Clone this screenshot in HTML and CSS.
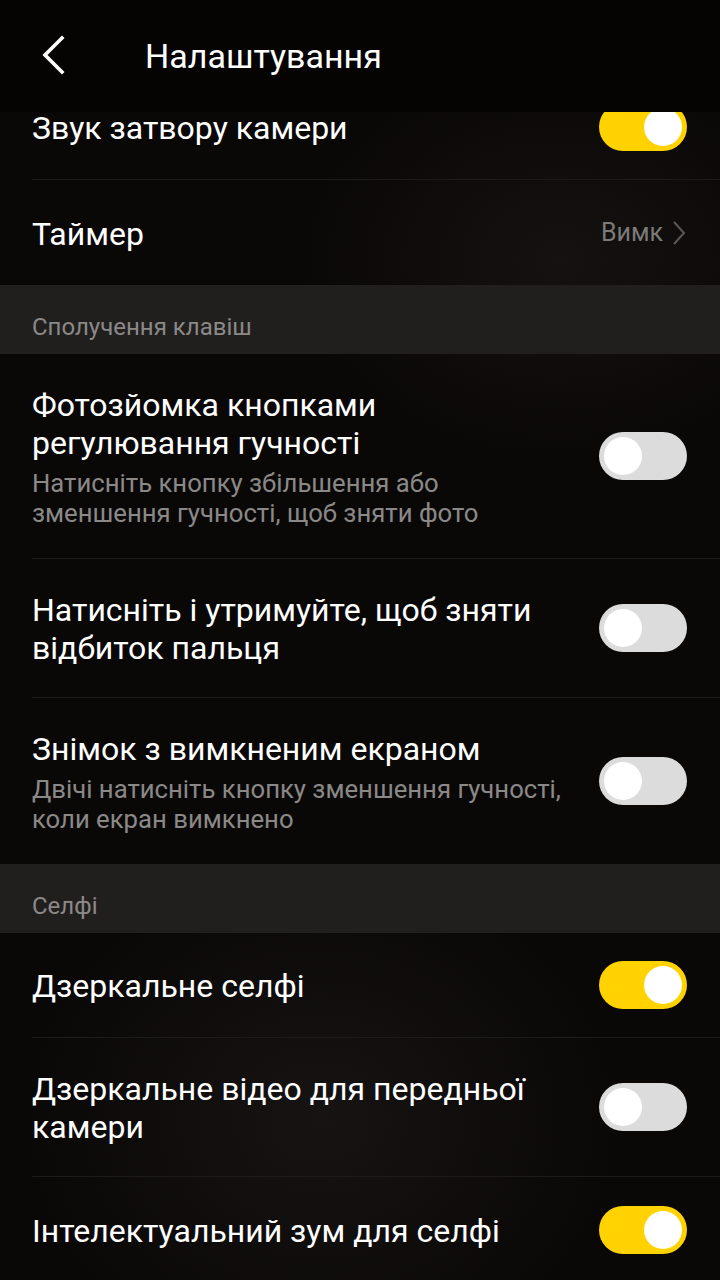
FILE: index.html
```html
<!DOCTYPE html>
<html lang="uk">
<head>
  <meta charset="UTF-8">
  <title>Налаштування</title>
  <link rel="stylesheet" href="styles.css">
</head>
<body>
  <div class="screen">
    <div class="topbar">
      <svg class="back" width="30" height="44" viewBox="0 0 30 44">
        <path d="M24 5 L7 22 L24 39" fill="none" stroke="#fff" stroke-width="3.6" stroke-linecap="square"/>
      </svg>
      <h1>Налаштування</h1>
    </div>

    <div class="list-view">
      <div class="list">
        <div class="row">
          <div class="text"><div class="title">Звук затвору камери</div></div>
          <div class="switch on"><span class="knob"></span></div>
        </div>
        <div class="row">
          <div class="text"><div class="title">Таймер</div></div>
          <div class="value">Вимк
            <svg width="16" height="28" viewBox="0 0 16 28"><path d="M3 3 L13 14 L3 25" fill="none" stroke="#5a5857" stroke-width="2"/></svg>
          </div>
        </div>

        <div class="section">Сполучення клавіш</div>

        <div class="row">
          <div class="text">
            <div class="title">Фотозйомка кнопками регулювання гучності</div>
            <div class="sub">Натисніть кнопку збільшення або<br>зменшення гучності, щоб зняти фото</div>
          </div>
          <div class="switch"><span class="knob"></span></div>
        </div>
        <div class="row">
          <div class="text"><div class="title">Натисніть і утримуйте, щоб зняти відбиток пальця</div></div>
          <div class="switch"><span class="knob"></span></div>
        </div>
        <div class="row">
          <div class="text">
            <div class="title">Знімок з вимкненим екраном</div>
            <div class="sub">Двічі натисніть кнопку зменшення гучності, коли екран вимкнено</div>
          </div>
          <div class="switch"><span class="knob"></span></div>
        </div>

        <div class="section">Селфі</div>

        <div class="row">
          <div class="text"><div class="title">Дзеркальне селфі</div></div>
          <div class="switch on"><span class="knob"></span></div>
        </div>
        <div class="row">
          <div class="text"><div class="title">Дзеркальне відео для передньої камери</div></div>
          <div class="switch"><span class="knob"></span></div>
        </div>
        <div class="row">
          <div class="text"><div class="title">Інтелектуальний зум для селфі</div></div>
          <div class="switch on"><span class="knob"></span></div>
        </div>
      </div>
    </div>
  </div>
</body>
</html>
```

FILE: styles.css
```css
body {
  margin: 0;
  font-family: Roboto, "Noto Sans", sans-serif;
  background: #0a0807;
  color: #fff;
}

.screen {
  width: 720px;
  height: 1280px;
  overflow: hidden;
  display: flex;
  flex-direction: column;
  background:
    radial-gradient(ellipse 260px 200px at 560px 260px, rgba(40, 36, 34, 0.35), transparent),
    radial-gradient(ellipse 300px 260px at 320px 1120px, rgba(45, 42, 40, 0.35), transparent),
    #0a0807;
}

.topbar {
  height: 112px;
  flex-shrink: 0;
  display: flex;
  align-items: center;
  padding-left: 38px;
  background: #050403;
  position: relative;
  z-index: 1;
}

.topbar .back {
  margin-top: -2px;
}

.topbar h1 {
  margin: 0 0 0 77px;
  font-size: 34px;
  font-weight: 400;
}

.list-view {
  flex: 1;
  overflow: hidden;
}

.list {
  margin-top: -37px;
}

.row {
  box-sizing: border-box;
  min-height: 105px;
  display: flex;
  align-items: center;
  gap: 34px;
  margin-left: 32px;
  padding-right: 33px;
  border-bottom: 1px solid #1d1b1a;
}

.row:has(+ .section),
.row:last-child {
  border-bottom: none;
}

.text {
  flex: 1;
  padding: 32px 0 30px;
}

.title {
  font-size: 32px;
  line-height: 38px;
}

.sub {
  font-size: 25.7px;
  line-height: 30px;
  color: #8b8988;
  margin-top: 6px;
}

.value {
  display: flex;
  align-items: center;
  gap: 8px;
  font-size: 25px;
  color: #7d7b7a;
}

.section {
  box-sizing: border-box;
  height: 69px;
  display: flex;
  align-items: center;
  padding: 14px 0 0 32px;
  background: #211f1e;
  color: #8b8988;
  font-size: 24px;
}

.switch {
  width: 88px;
  height: 48px;
  border-radius: 24px;
  background: #dcdcdc;
  flex-shrink: 0;
  display: flex;
  align-items: center;
  padding: 0 5px;
  box-sizing: border-box;
}

.switch .knob {
  width: 38px;
  height: 38px;
  border-radius: 50%;
  background: #fff;
}

.switch.on {
  background: #ffd200;
  justify-content: flex-end;
}
```
